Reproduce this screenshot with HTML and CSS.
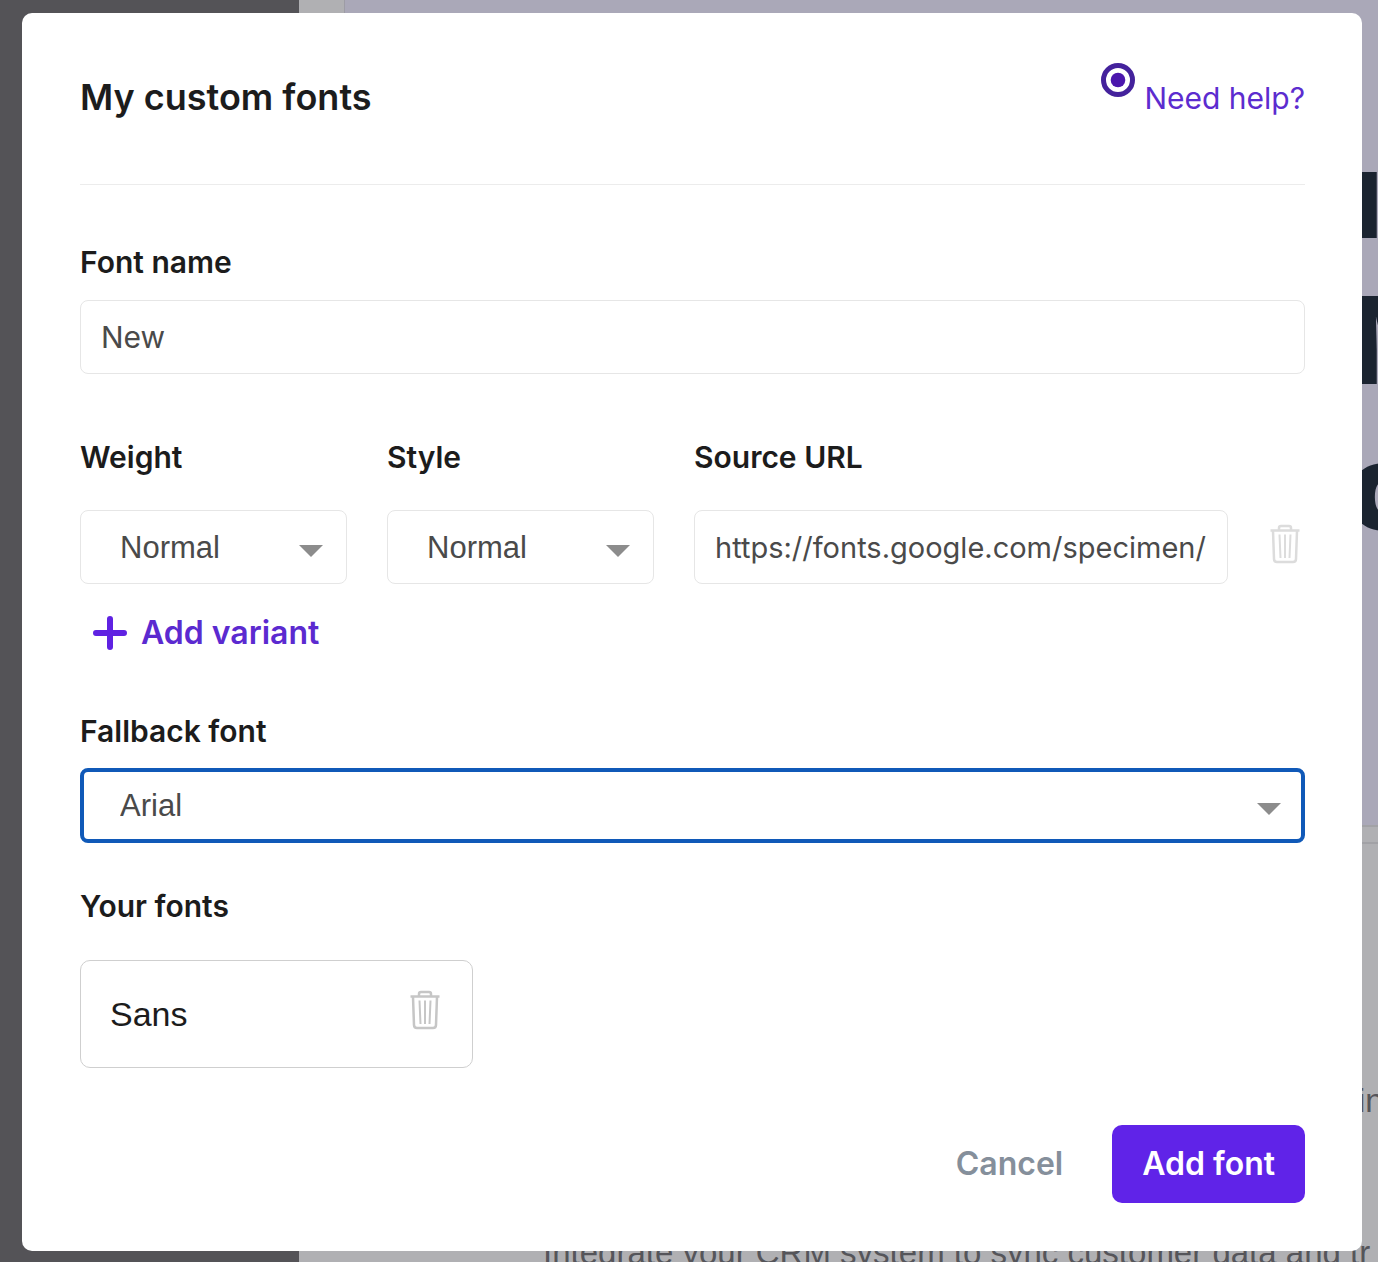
FILE: index.html
```html
<!DOCTYPE html>
<html lang="en">
<head>
    <meta charset="UTF-8">
    <title>My custom fonts</title>
    <link rel="stylesheet" href="styles.css">
</head>
<body>
    <div class="page">
        <div class="sidebar"></div>
        <div class="preview">
            <div class="hero">
                <p class="headline">ı<br>M<br>o</p>
            </div>
            <div class="features">
                <p class="feature side">in</p>
                <p class="feature">Integrate your CRM system to sync customer data and tr</p>
            </div>
        </div>
    </div>
    <form class="modal">
        <div class="header">
            <h1>My custom fonts</h1>
            <div class="help">
                <svg class="dot" viewBox="0 0 34 34">
                    <circle cx="17" cy="17" r="14.5" fill="none" stroke="#44229c" stroke-width="5"/>
                    <circle cx="17" cy="17" r="7.3" fill="#4b16ad"/>
                </svg>
                <a href="#">Need help?</a>
            </div>
        </div>
        <div class="name">
            <label for="name">Font name</label>
            <input type="text" id="name" class="box" value="New">
        </div>
        <div class="variant">
            <div class="field">
                <label for="weight">Weight</label>
                <div class="select">
                    <select id="weight" class="box"><option>Normal</option></select>
                </div>
            </div>
            <div class="field">
                <label for="style">Style</label>
                <div class="select">
                    <select id="style" class="box"><option>Normal</option></select>
                </div>
            </div>
            <div class="field">
                <label for="url">Source URL</label>
                <input type="text" id="url" class="box url" value="https://fonts.google.com/specimen/">
            </div>
            <button type="button" class="trash light" aria-label="Delete variant">
                <svg viewBox="0 0 30 40">
                    <path d="M9 6V4Q9 2 11 2H19Q21 2 21 4V6M0.500 6.500H29.500M3 7L4 35Q4 38 7 38H23Q26 38 26 35L27 7"/>
                    <path class="bars" d="M9.500 10.500L10.500 34M15 10.500V34M20.500 10.500L19.500 34"/>
                </svg>
            </button>
        </div>
        <button type="button" class="add">
            <svg viewBox="0 0 34 34"><path d="M17 3V31M3 17H31"/></svg>
            Add variant
        </button>
        <div class="fallback">
            <label for="fallback">Fallback font</label>
            <div class="select">
                <select id="fallback" class="box active"><option>Arial</option></select>
            </div>
        </div>
        <h2>Your fonts</h2>
        <div class="card">
            <span>Sans</span>
            <button type="button" class="trash" aria-label="Delete Sans">
                <svg viewBox="0 0 30 40">
                    <path d="M9 6V4Q9 2 11 2H19Q21 2 21 4V6M0.500 6.500H29.500M3 7L4 35Q4 38 7 38H23Q26 38 26 35L27 7"/>
                    <path class="bars" d="M9.500 10.500L10.500 34M15 10.500V34M20.500 10.500L19.500 34"/>
                </svg>
            </button>
        </div>
        <div class="footer">
            <button type="button" class="cancel">Cancel</button>
            <button type="submit" class="submit">Add font</button>
        </div>
    </form>
</body>
</html>
```

FILE: styles.css
```css
*{
    margin: 0;
    padding: 0;
    box-sizing: border-box;
}
body{
    position: relative;
    overflow: hidden;
    padding: 13px 16px 11px 22px;
    font-family: Inter, "Liberation Sans", sans-serif;
    font-size: 30px;
    line-height: 36px;
    color: #1c1c1c;
}
button,input,select{
    font: inherit;
    border: none;
    background: none;
}
button{
    cursor: pointer;
}
/* page behind the dialog */
.page{
    position: absolute;
    inset: 0;
    display: flex;
    overflow: hidden;
}
.sidebar{
    width: 299px;
    flex: none;
    background: #545357;
}
.preview{
    flex: 1;
    min-width: 0;
    background: #b0b0b3;
}
.hero{
    height: 827px;
    margin-left: 45px;
    padding-top: 121px;
    background: #aaa8b8;
    border-bottom: 2px solid #a2a2a6;
    border-left: 1px solid #9d9ca5;
}
.headline{
    width: 31px;
    margin-left: auto;
    font-size: 121px;
    line-height: 146px;
    font-weight: 900;
    color: #1b2430;
}
.features{
    margin-top: 15px;
    padding: 239px 0 0 244px;
    border-top: 2px solid #a2a2a6;
    font-family: "Liberation Sans", Arial, sans-serif;
    font-size: 33px;
    color: #55555a;
}
.feature{
    white-space: nowrap;
    padding-top: 85px;
}
.side{
    width: 20px;
    margin-left: auto;
    padding: 0 0 31px;
}
.modal{
    position: relative;
    padding: 0 57px 48px 58px;
    border-radius: 10px;
    background: #fff;
}
.header{
    display: flex;
    justify-content: space-between;
    height: 172px;
    padding-top: 50px;
    border-bottom: 1px solid #ececec;
}
h1{
    font-size: 36px;
    line-height: 68px;
    font-weight: 600;
}
h2,label{
    display: block;
    font-size: 30px;
    line-height: 36px;
    font-weight: 600;
}
.help{
    display: flex;
    align-items: flex-start;
    gap: 9px;
}
.help a{
    color: #5c2ccf;
    text-decoration: none;
    line-height: 70px;
}
.dot{
    width: 34px;
    height: 34px;
}
.name{
    padding-top: 59px;
}
.box{
    display: block;
    width: 100%;
    height: 74px;
    padding: 0 20px;
    border: 1px solid #e6e6e6;
    border-radius: 8px;
    background: #fff;
    color: #4a4a4a;
}
.name .box{
    margin-top: 20px;
}
.url{
    font-size: 29px;
}
.select{
    position: relative;
}
.select::after{
    content: "";
    position: absolute;
    right: 24px;
    top: 35px;
    border: 12px solid transparent;
    border-top-color: #8c8c8c;
    border-bottom: none;
    pointer-events: none;
}
select.box{
    appearance: none;
    padding: 2px 39px 0;
    font-family: "Liberation Sans", Arial, sans-serif;
    font-size: 31px;
}
select.active{
    height: 75px;
    border: 4px solid #1059b8;
    padding: 1px 36px 0;
}
.variant{
    display: grid;
    grid-template-columns: 1fr 1fr 2fr 37px;
    column-gap: 40px;
    align-items: end;
    padding-top: 65px;
}
.variant label{
    margin-bottom: 35px;
}
.trash{
    width: 30px;
    height: 40px;
}
.trash svg{
    display: block;
    fill: none;
    stroke: #c6c6c6;
    stroke-width: 2.5;
}
.trash .bars{
    stroke-width: 2;
}
.variant .trash{
    justify-self: end;
    margin: 0 5px 20px 0;
}
.trash.light svg{
    stroke: #dcdcdc;
}
.add{
    display: flex;
    align-items: center;
    gap: 14px;
    margin: 31px 0 62px 13px;
    font-size: 32px;
    font-weight: 600;
    color: #5b2ad0;
}
.add svg{
    width: 34px;
    height: 34px;
    stroke: #5f22e2;
    stroke-width: 6;
    stroke-linecap: round;
}
.fallback .select{
    margin: 19px 0 45px;
}
.card{
    display: flex;
    justify-content: space-between;
    align-items: center;
    width: 393px;
    height: 108px;
    margin: 36px 0 57px;
    padding: 0 32px 8px 29px;
    border: 1px solid #cfcfcf;
    border-radius: 10px;
    font-family: "Liberation Sans", Arial, sans-serif;
    font-size: 34px;
}
.card span{
    padding-top: 8px;
}
.footer{
    display: flex;
    justify-content: flex-end;
    gap: 49px;
}
.footer button{
    height: 78px;
    font-size: 32px;
    font-weight: 600;
}
.cancel{
    color: #858f9b;
}
.footer .submit{
    padding: 0 30px;
    border-radius: 10px;
    background: #6023e8;
    color: #fff;
}
```
